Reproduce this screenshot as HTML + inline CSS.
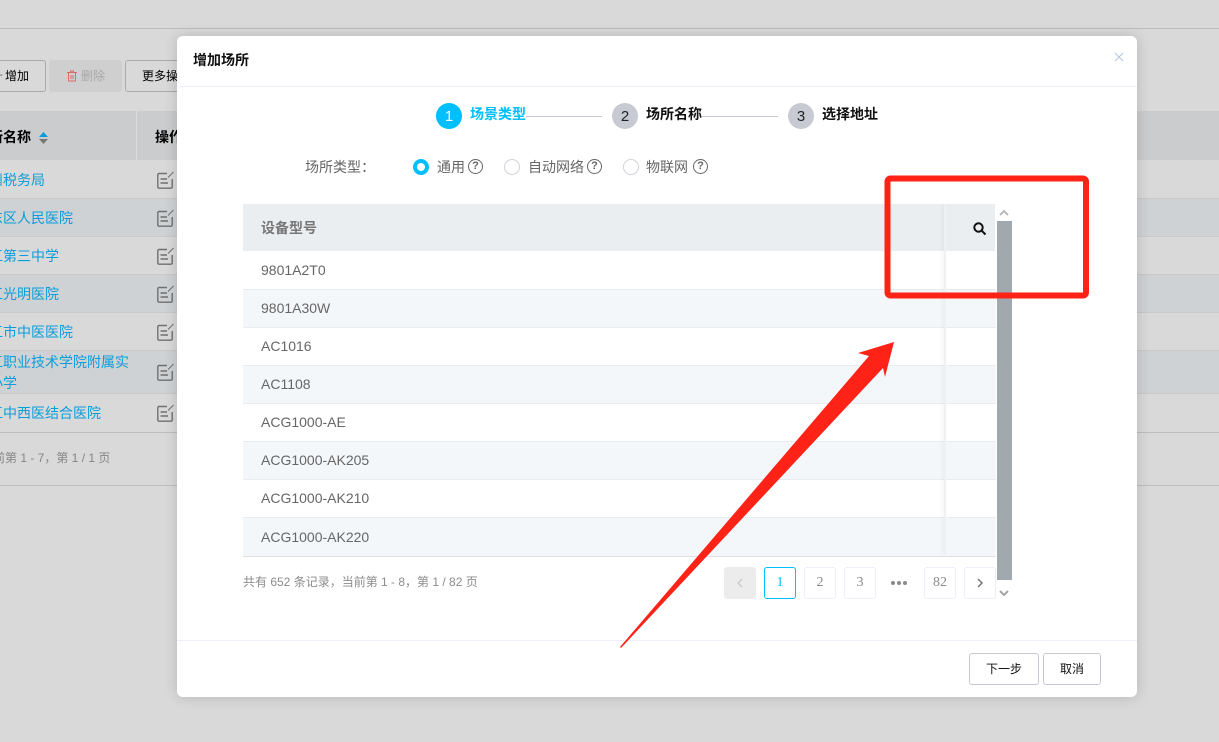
<!DOCTYPE html>
<html lang="zh"><head><meta charset="utf-8"><title>增加场所</title>
<style>
html,body{margin:0;padding:0}
body{width:1219px;height:742px;position:relative;overflow:hidden;background:#d9d9d9;font-family:"Liberation Sans","Noto Sans CJK SC",sans-serif;font-size:14px;color:#000}
.a{position:absolute;white-space:nowrap}
.hl{position:absolute;left:0;width:1219px;height:1px;background:#bdbdbd}
.band{position:absolute;left:0;width:1219px;background:#cfd2d5}
.link{color:#0a9ddb;line-height:20px}
.btn{position:absolute;box-sizing:border-box;border:1px solid #aaa;border-radius:3px;text-align:center;font-size:12px;line-height:30px;height:32px}
.edit{position:absolute;left:157px}
#modal{position:absolute;left:177px;top:36px;width:960px;height:661px;background:#fff;border-radius:6px;box-shadow:0 0 14px rgba(0,0,0,.16);overflow:hidden}
.m{position:absolute;white-space:nowrap}
.circle{position:absolute;top:67px;width:26px;height:26px;border-radius:50%;background:#c8cad3;text-align:center;line-height:27px;font-size:15px;color:#222}
.step{position:absolute;top:68px;font-size:14px;font-weight:bold;line-height:20px;white-space:nowrap}
.sl{position:absolute;top:80px;height:1px;background:#c8c8d6}
.radio{position:absolute;top:123px;box-sizing:border-box;width:16px;height:16px;border-radius:50%;border:1px solid #d0d2da;background:#fff}
.rl{position:absolute;top:121px;line-height:20px;font-size:14px;color:#666;white-space:nowrap}
.q{position:absolute;top:123px;box-sizing:border-box;width:15px;height:15px;border:1px solid #666;border-radius:50%;font-size:11px;line-height:13px;text-align:center;color:#666;font-weight:bold}
.row{position:absolute;left:66px;width:753px;height:38px;box-sizing:border-box;border-bottom:1px solid #e9ecef;padding-left:18px;font-size:14px;line-height:37px;color:#666}
.alt{background:#f4f7fa}
.pg{position:absolute;top:531px;box-sizing:border-box;width:32px;height:32px;border:1px solid #eeeef8;border-radius:3px;text-align:center;font-family:"Liberation Serif",serif;font-size:14px;line-height:30px;color:#8a8a8a}
.fbtn{position:absolute;top:617px;height:32px;box-sizing:border-box;border:1px solid #c8c8d2;border-radius:3px;text-align:center;font-size:12px;line-height:30px;color:#111}
</style></head><body>

<div class="hl" style="top:28px"></div>

<div class="a" style="left:-4px;top:66px;font-size:12px;line-height:18px;color:#666">+</div>
<div class="btn" style="left:-10px;top:60px;width:56px;text-align:left;padding-left:14px">增加</div>
<div class="btn" style="left:49px;top:60px;width:73px;background:#cfcfcf;border-color:#cfcfcf;color:#a8a8a8;text-align:left;padding-left:31px">删除</div>
<svg class="a" style="left:67px;top:70px" width="10" height="12" viewBox="0 0 10 12" fill="none" stroke="#d86a6a" stroke-width="1"><path d="M0 2.500H10M3.500 2.500V1H6.500V2.500M1.500 2.500V11H8.500V2.500M4 5V9M6 5V9"/></svg>
<div class="btn" style="left:125px;top:60px;width:70px;text-align:left;padding-left:16px">更多操作</div>

<div class="band" style="top:111px;height:49px;background:#cbcccd"></div>
<div class="a" style="left:136px;top:111px;width:1px;height:49px;background:#dcdcdc"></div>
<div class="a" style="left:-11px;top:127px;font-weight:bold;line-height:20px">所名称</div>
<svg class="a" style="left:39px;top:132px" width="9" height="12"><path d="M4.500 0L9 5H0z" fill="#0a9ddb"/><path d="M0 7H9L4.500 12z" fill="#777"/></svg>
<div class="a" style="left:155px;top:127px;font-weight:bold;line-height:20px">操作</div>

<div class="band" style="top:198px;height:38px"></div>
<div class="band" style="top:274px;height:38px"></div>
<div class="band" style="top:350px;height:43px"></div>
<div class="hl" style="top:198px;background:#c9c9c9"></div>
<div class="hl" style="top:236px;background:#c9c9c9"></div>
<div class="hl" style="top:274px;background:#c9c9c9"></div>
<div class="hl" style="top:312px;background:#c9c9c9"></div>
<div class="hl" style="top:350px;background:#c9c9c9"></div>
<div class="hl" style="top:393px;background:#c9c9c9"></div>
<div class="hl" style="top:432px"></div>
<div class="hl" style="top:485px"></div>

<div class="a link" style="left:-25px;top:170px">荆州税务局</div>
<div class="a link" style="left:-11px;top:208px">东区人民医院</div>
<div class="a link" style="left:-11px;top:246px">江第三中学</div>
<div class="a link" style="left:-11px;top:284px">江光明医院</div>
<div class="a link" style="left:-11px;top:322px">江市中医医院</div>
<div class="a link" style="left:-11px;top:352px">江职业技术学院附属实</div>
<div class="a link" style="left:-11px;top:373px">小学</div>
<div class="a link" style="left:-11px;top:403px">江中西医结合医院</div>
<div class="a" style="left:-19px;top:449px;font-size:12px;line-height:18px;color:#858585">当前第 1 - 7，第 1 / 1 页</div>

<svg class="edit" style="top:171px" width="18" height="18" viewBox="0 0 18 18" fill="none" stroke="#707070" stroke-width="1.400"><path d="M10 2.500H2a1.200 1.200 0 0 0-1.200 1.200V16a1.200 1.200 0 0 0 1.200 1.200H14a1.200 1.200 0 0 0 1.200-1.200V8"/><path d="M3.500 8H10M3.500 12H11"/><path d="M11 6.500L16.500 1" stroke-width="1"/></svg>
<svg class="edit" style="top:209px" width="18" height="18" viewBox="0 0 18 18" fill="none" stroke="#707070" stroke-width="1.400"><path d="M10 2.500H2a1.200 1.200 0 0 0-1.200 1.200V16a1.200 1.200 0 0 0 1.200 1.200H14a1.200 1.200 0 0 0 1.200-1.200V8"/><path d="M3.500 8H10M3.500 12H11"/><path d="M11 6.500L16.500 1" stroke-width="1"/></svg>
<svg class="edit" style="top:247px" width="18" height="18" viewBox="0 0 18 18" fill="none" stroke="#707070" stroke-width="1.400"><path d="M10 2.500H2a1.200 1.200 0 0 0-1.200 1.200V16a1.200 1.200 0 0 0 1.200 1.200H14a1.200 1.200 0 0 0 1.200-1.200V8"/><path d="M3.500 8H10M3.500 12H11"/><path d="M11 6.500L16.500 1" stroke-width="1"/></svg>
<svg class="edit" style="top:285px" width="18" height="18" viewBox="0 0 18 18" fill="none" stroke="#707070" stroke-width="1.400"><path d="M10 2.500H2a1.200 1.200 0 0 0-1.200 1.200V16a1.200 1.200 0 0 0 1.200 1.200H14a1.200 1.200 0 0 0 1.200-1.200V8"/><path d="M3.500 8H10M3.500 12H11"/><path d="M11 6.500L16.500 1" stroke-width="1"/></svg>
<svg class="edit" style="top:323px" width="18" height="18" viewBox="0 0 18 18" fill="none" stroke="#707070" stroke-width="1.400"><path d="M10 2.500H2a1.200 1.200 0 0 0-1.200 1.200V16a1.200 1.200 0 0 0 1.200 1.200H14a1.200 1.200 0 0 0 1.200-1.200V8"/><path d="M3.500 8H10M3.500 12H11"/><path d="M11 6.500L16.500 1" stroke-width="1"/></svg>
<svg class="edit" style="top:363px" width="18" height="18" viewBox="0 0 18 18" fill="none" stroke="#707070" stroke-width="1.400"><path d="M10 2.500H2a1.200 1.200 0 0 0-1.200 1.200V16a1.200 1.200 0 0 0 1.200 1.200H14a1.200 1.200 0 0 0 1.200-1.200V8"/><path d="M3.500 8H10M3.500 12H11"/><path d="M11 6.500L16.500 1" stroke-width="1"/></svg>
<svg class="edit" style="top:404px" width="18" height="18" viewBox="0 0 18 18" fill="none" stroke="#707070" stroke-width="1.400"><path d="M10 2.500H2a1.200 1.200 0 0 0-1.200 1.200V16a1.200 1.200 0 0 0 1.200 1.200H14a1.200 1.200 0 0 0 1.200-1.200V8"/><path d="M3.500 8H10M3.500 12H11"/><path d="M11 6.500L16.500 1" stroke-width="1"/></svg>

<div id="modal">
  <div class="m" style="left:16px;top:14px;font-size:14px;font-weight:bold;line-height:20px;color:#111">增加场所</div>
  <svg class="m" style="left:937px;top:16px" width="10" height="10"><path d="M1 1L9 9M9 1L1 9" stroke="#b5c6de" stroke-width="1"/></svg>
  <div class="m" style="left:0;top:50px;width:960px;height:1px;background:#efeefb"></div>

  <div class="circle" style="left:259px;background:#00bfff;color:#fff">1</div>
  <div class="step" style="left:293px;color:#00bfff">场景类型</div>
  <div class="sl" style="left:349px;width:76px"></div>
  <div class="circle" style="left:435px">2</div>
  <div class="step" style="left:469px;color:#111">场所名称</div>
  <div class="sl" style="left:525px;width:76px"></div>
  <div class="circle" style="left:611px">3</div>
  <div class="step" style="left:645px;color:#111">选择地址</div>

  <div class="rl" style="left:128px">场所类型：</div>
  <div class="radio" style="left:236px;border:4px solid #00bfff"></div>
  <div class="rl" style="left:260px">通用</div><div class="q" style="left:291px">?</div>
  <div class="radio" style="left:327px"></div>
  <div class="rl" style="left:351px">自动网络</div><div class="q" style="left:410px">?</div>
  <div class="radio" style="left:446px"></div>
  <div class="rl" style="left:469px">物联网</div><div class="q" style="left:516px">?</div>

  <div class="m" style="left:66px;top:168px;width:752px;height:47px;background:#ebeef1"></div>
  <div class="m" style="left:84px;top:182px;font-size:14px;font-weight:bold;line-height:20px;color:#777">设备型号</div>
  <svg class="m" style="left:795px;top:185px" width="15" height="15" fill="none" stroke="#111" stroke-width="2"><circle cx="6.500" cy="6.500" r="4.200"/><path d="M9.500 9.500L13.500 13.500"/></svg>

  <div class="row" style="top:215px;height:39px;line-height:38px">9801A2T0</div>
  <div class="row alt" style="top:254px">9801A30W</div>
  <div class="row" style="top:292px">AC1016</div>
  <div class="row alt" style="top:330px">AC1108</div>
  <div class="row" style="top:368px">ACG1000-AE</div>
  <div class="row alt" style="top:406px">ACG1000-AK205</div>
  <div class="row" style="top:444px">ACG1000-AK210</div>
  <div class="row alt" style="top:482px;height:39px;border-bottom-color:#dcdfe3;line-height:38px">ACG1000-AK220</div>
  <div class="m" style="left:767px;top:168px;width:2px;height:350px;background:#eff0f2;box-shadow:-2px 0 3px rgba(0,0,0,.06)"></div>

  <svg class="m" style="left:822px;top:173px" width="10" height="8"><path d="M1 6L5 2L9 6" stroke="#b9b9b9" stroke-width="2" fill="none"/></svg>
  <div class="m" style="left:820px;top:185px;width:15px;height:359px;background:#a2a9ae"></div>
  <svg class="m" style="left:822px;top:553px" width="10" height="8"><path d="M1 2L5 6L9 2" stroke="#a5a5a5" stroke-width="2" fill="none"/></svg>

  <div class="m" style="left:66px;top:537px;font-size:12px;line-height:18px;color:#8c8c8c">共有 652 条记录，当前第 1 - 8，第 1 / 82 页</div>

  <div class="pg" style="left:547px;background:#ececec;border-color:#ececec"><svg width="8" height="10" style="margin-top:10px"><path d="M6 1L2 5L6 9" stroke="#ccc" stroke-width="1.500" fill="none"/></svg></div>
  <div class="pg" style="left:587px;border-color:#00bfff;color:#00bfff">1</div>
  <div class="pg" style="left:627px">2</div>
  <div class="pg" style="left:667px">3</div>
  <div class="m" style="left:714px;top:545px;width:4px;height:4px;border-radius:50%;background:#8a8a8a;box-shadow:6px 0 0 #8a8a8a,12px 0 0 #8a8a8a"></div>
  <div class="pg" style="left:747px">82</div>
  <div class="pg" style="left:787px"><svg width="8" height="10" style="margin-top:10px"><path d="M2 1L6 5L2 9" stroke="#777" stroke-width="1.500" fill="none"/></svg></div>

  <div class="m" style="left:0;top:604px;width:960px;height:1px;background:#efeefb"></div>
  <div class="fbtn" style="left:792px;width:70px">下一步</div>
  <div class="fbtn" style="left:866px;width:58px">取消</div>
</div>

<svg class="a" style="left:0;top:0" width="1219" height="742">
  <rect x="887.500" y="178.500" width="198.500" height="117" rx="3" fill="none" stroke="#ff2216" stroke-width="6"/>
  <path d="M894 342L858 353L869 356L620 647L621 648L883 368L885 377z" fill="#ff2216"/>
</svg>
</body></html>
